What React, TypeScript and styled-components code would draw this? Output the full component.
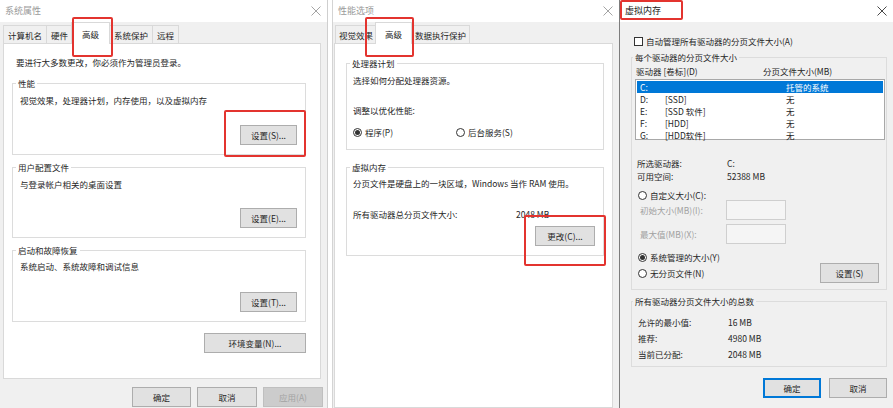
import React from "react"
import styled, { createGlobalStyle } from "styled-components"

const GlobalStyle = createGlobalStyle`
  html, body { margin: 0; padding: 0; background: #fff; }
  body {
    font-family: "Noto Sans CJK SC", "Noto Sans", sans-serif;
    font-size: 8.5px;
    color: #262626;
  }
  * { box-sizing: border-box; }
`

const Screen = styled.div`
  display: flex;
  width: 893px;
  height: 408px;
  overflow: hidden;
  background: #fff;
`

const Spacer = styled.div<{ $w: number }>`
  flex: none;
  width: ${(p) => p.$w}px;
  background: #fff;
`

const Dialog = styled.div<{ $width: number; $left?: string; $right?: string }>`
  flex: none;
  width: ${(p) => p.$width}px;
  height: 408px;
  display: flex;
  flex-direction: column;
  background: #f0f0f0;
  border-left: ${(p) => (p.$left ? `1px solid ${p.$left}` : "none")};
  border-right: ${(p) => (p.$right ? `1px solid ${p.$right}` : "none")};
`

const TitleBar = styled.div`
  flex: none;
  height: 22px;
  display: flex;
  align-items: center;
  justify-content: space-between;
  padding: 0 6px 0 5px;
  background: #fff;
`

const Title = styled.span<{ $active?: boolean }>`
  position: relative;
  font-size: 9px;
  line-height: 12px;
  color: ${(p) => (p.$active ? "#1a1a1a" : "#9a9a9a")};
`

const Body = styled.div<{ $pad: string }>`
  flex: 1;
  display: flex;
  flex-direction: column;
  padding: ${(p) => p.$pad};
  min-height: 0;
`

const TabRow = styled.div<{ $indent: number }>`
  flex: none;
  display: flex;
  align-items: flex-end;
  height: 21px;
  padding-left: ${(p) => p.$indent}px;
`

const Tab = styled.div<{ $selected?: boolean; $px: number }>`
  position: relative;
  display: flex;
  align-items: center;
  height: ${(p) => (p.$selected ? 22 : 18)}px;
  padding: 0 ${(p) => (p.$selected ? p.$px + 6 : p.$px)}px;
  margin: 0 -1px ${(p) => (p.$selected ? -1 : 0)}px ${(p) => (p.$selected ? -1 : 0)}px;
  border: 1px solid #d9d9d9;
  border-bottom: none;
  background: ${(p) => (p.$selected ? "#fff" : "#f0f0f0")};
  z-index: ${(p) => (p.$selected ? 2 : 1)};
  white-space: nowrap;
  line-height: 12px;
`

const TabPanel = styled.div<{ $height?: number; $pad: string }>`
  display: flex;
  flex-direction: column;
  ${(p) => (p.$height ? `height: ${p.$height}px; flex: none;` : "flex: 1;")}
  padding: ${(p) => p.$pad};
  background: #fff;
  border: 1px solid #d9d9d9;
`

const Highlight = styled.span<{ $t: number; $r: number; $b: number; $l: number }>`
  position: absolute;
  top: ${(p) => p.$t}px;
  right: ${(p) => p.$r}px;
  bottom: ${(p) => p.$b}px;
  left: ${(p) => p.$l}px;
  border: 2px solid #e3342f;
  border-radius: 2px;
  pointer-events: none;
  z-index: 5;
`

const Note = styled.div`
  line-height: 12px;
  padding-left: 4px;
  margin-bottom: 9px;
`

const Group = styled.fieldset<{ $pad: string; $mt?: number }>`
  display: flex;
  flex-direction: column;
  margin: ${(p) => p.$mt ?? 0}px 0 0 0;
  padding: ${(p) => p.$pad};
  border: 1px solid #dcdcdc;
  min-width: 0;
`

const Legend = styled.legend<{ $shift: number }>`
  padding: 0 2px;
  margin-left: ${(p) => p.$shift}px;
  line-height: 12px;
  font-size: 8.5px;
`

const Text = styled.div<{ $mt?: number }>`
  line-height: 12px;
  margin-top: ${(p) => p.$mt ?? 0}px;
  white-space: nowrap;
`

const ButtonRow = styled.div<{ $mt?: number; $gap?: number }>`
  display: flex;
  justify-content: flex-end;
  gap: ${(p) => p.$gap ?? 6}px;
  margin-top: ${(p) => p.$mt ?? 0}px;
`

const Button = styled.button<{ $w: number; $primary?: boolean }>`
  position: relative;
  flex: none;
  width: ${(p) => p.$w}px;
  height: 20px;
  padding: 0;
  font-family: inherit;
  font-size: 8.5px;
  color: #262626;
  background: #e1e1e1;
  border: 1px solid ${(p) => (p.$primary ? "#0078d7" : "#adadad")};
  box-shadow: ${(p) => (p.$primary ? "inset 0 0 0 1px #0078d7" : "none")};
  &:disabled {
    color: #a3a3a3;
    background: #cccccc;
    border-color: #bfbfbf;
  }
`

const Anchor = styled.span`
  position: relative;
  display: inline-flex;
`

const Footer = styled.div`
  flex: none;
  display: flex;
  justify-content: flex-end;
  gap: 6px;
  padding-top: 8px;
  margin-right: -2px;
`

const InfoRow = styled.div<{ $col: number; $mt?: number; $h?: number; $indent?: number }>`
  display: grid;
  grid-template-columns: ${(p) => p.$col}px auto;
  align-items: center;
  height: ${(p) => p.$h ?? 12}px;
  margin-top: ${(p) => p.$mt ?? 0}px;
  padding-left: ${(p) => p.$indent ?? 0}px;
  white-space: nowrap;
`

const RadioGrid = styled.div<{ $mt: number }>`
  display: grid;
  grid-template-columns: 103px auto;
  margin-top: ${(p) => p.$mt}px;
`

const Choice = styled.label<{ $mt?: number; $indent?: number }>`
  display: flex;
  align-items: center;
  gap: 3px;
  height: 12px;
  margin-top: ${(p) => p.$mt ?? 0}px;
  padding-left: ${(p) => p.$indent ?? 0}px;
  white-space: nowrap;
`

const RadioDot = styled.span<{ $on?: boolean }>`
  flex: none;
  width: 9px;
  height: 9px;
  border: 1px solid #333;
  border-radius: 50%;
  background: #fff;
  display: flex;
  align-items: center;
  justify-content: center;
  &::after {
    content: "";
    width: 5px;
    height: 5px;
    border-radius: 50%;
    background: ${(p) => (p.$on ? "#333" : "transparent")};
  }
`

const CheckBox = styled.span`
  flex: none;
  width: 9px;
  height: 9px;
  border: 1px solid #333;
  background: #fff;
`

const ListHeader = styled.div`
  display: grid;
  grid-template-columns: 127px auto;
  height: 12px;
  line-height: 12px;
  padding-left: 1px;
`

const ListBox = styled.div`
  margin-top: 2px;
  height: 61px;
  padding: 1px;
  background: #fff;
  border: 1px solid #a8a8a8;
`

const ListRow = styled.div<{ $selected?: boolean }>`
  display: grid;
  grid-template-columns: 25px 121px auto;
  height: 12px;
  line-height: 12px;
  padding-left: 3px;
  background: ${(p) => (p.$selected ? "#0078d7" : "transparent")};
  color: ${(p) => (p.$selected ? "#fff" : "inherit")};
  white-space: nowrap;
`

const SizeRow = styled.div<{ $mt: number }>`
  display: grid;
  grid-template-columns: 86px 60px;
  align-items: center;
  height: 20px;
  margin-top: ${(p) => p.$mt}px;
  padding-left: 5px;
  color: #a0a0a0;
  white-space: nowrap;
`

const Field = styled.div`
  height: 20px;
  background: #f5f5f5;
  border: 1px solid #cfcfcf;
`

const SplitRow = styled.div`
  display: flex;
  align-items: center;
  justify-content: space-between;
  padding-right: 6px;
`

const Close = ({ color }: { color: string }) => (
  <svg width="10" height="10" viewBox="0 0 10 10">
    <path d="M0.5 0.5 L9.5 9.5 M9.5 0.5 L0.5 9.5" stroke={color} strokeWidth="0.9" />
  </svg>
)

const SystemProperties = () => (
  <Dialog $width={328} $right="#cfcfcf">
    <TitleBar>
      <Title>系统属性</Title>
      <Close color="#9a9a9a" />
    </TitleBar>
    <Body $pad="0 6px 0 3px">
      <TabRow $indent={0}>
        <Tab $px={4}>计算机名</Tab>
        <Tab $px={4}>硬件</Tab>
        <Tab $px={4} $selected>
          高级
          <Highlight $t={-6} $r={-4} $b={-13} $l={0} />
        </Tab>
        <Tab $px={4}>系统保护</Tab>
        <Tab $px={4}>远程</Tab>
      </TabRow>
      <TabPanel $height={336} $pad="12px 14px 0 8px">
        <Note>要进行大多数更改，你必须作为管理员登录。</Note>
        <Group $pad="5px 8px 9px 7px">
          <Legend $shift={-4}>性能</Legend>
          <Text>视觉效果，处理器计划，内存使用，以及虚拟内存</Text>
          <ButtonRow $mt={19}>
            <Anchor>
              <Button $w={57}>设置(S)...</Button>
              <Highlight $t={-15} $r={-9} $b={-12} $l={-16} />
            </Anchor>
          </ButtonRow>
        </Group>
        <Group $pad="5px 8px 9px 7px" $mt={6}>
          <Legend $shift={-4}>用户配置文件</Legend>
          <Text>与登录帐户相关的桌面设置</Text>
          <ButtonRow $mt={18}>
            <Button $w={57}>设置(E)...</Button>
          </ButtonRow>
        </Group>
        <Group $pad="4px 8px 9px 7px" $mt={6}>
          <Legend $shift={-4}>启动和故障恢复</Legend>
          <Text>系统启动、系统故障和调试信息</Text>
          <ButtonRow $mt={20}>
            <Button $w={57}>设置(T)...</Button>
          </ButtonRow>
        </Group>
        <ButtonRow $mt={11}>
          <Button $w={102}>环境变量(N)...</Button>
        </ButtonRow>
      </TabPanel>
      <Footer>
        <Button $w={59}>确定</Button>
        <Button $w={60}>取消</Button>
        <Button $w={60} disabled>应用(A)</Button>
      </Footer>
    </Body>
  </Dialog>
)

const PerformanceOptions = () => (
  <Dialog $width={287} $left="#d4d4d4">
    <TitleBar>
      <Title>性能选项</Title>
      <Close color="#9a9a9a" />
    </TitleBar>
    <Body $pad="0 6px 0 1px">
      <TabRow $indent={1}>
        <Tab $px={3}>视觉效果</Tab>
        <Tab $px={3} $selected>
          高级
          <Highlight $t={-6} $r={-3} $b={-13} $l={-11} />
        </Tab>
        <Tab $px={3}>数据执行保护</Tab>
      </TabRow>
      <TabPanel $pad="13px 8px 0 11px">
        <Group $pad="5px 8px 11px 6px">
          <Legend $shift={-3}>处理器计划</Legend>
          <Text>选择如何分配处理器资源。</Text>
          <Text $mt={18}>调整以优化性能:</Text>
          <RadioGrid $mt={10}>
            <Choice>
              <RadioDot $on />
              程序(P)
            </Choice>
            <Choice>
              <RadioDot />
              后台服务(S)
            </Choice>
          </RadioGrid>
        </Group>
        <Group $pad="4px 8px 9px 6px" $mt={11}>
          <Legend $shift={-3}>虚拟内存</Legend>
          <Text>分页文件是硬盘上的一块区域，Windows 当作 RAM 使用。</Text>
          <InfoRow $col={163} $mt={19}>
            <span>所有驱动器总分页文件大小:</span>
            <span>2048 MB</span>
          </InfoRow>
          <ButtonRow $mt={6}>
            <Anchor>
              <Button $w={60}>更改(C)...</Button>
              <Highlight $t={-11} $r={-11} $b={-20} $l={-11} />
            </Anchor>
          </ButtonRow>
        </Group>
      </TabPanel>
    </Body>
  </Dialog>
)

const drives = [
  { letter: "C:", label: "", size: "托管的系统", selected: true },
  { letter: "D:", label: "[SSD]", size: "无" },
  { letter: "E:", label: "[SSD 软件]", size: "无" },
  { letter: "F:", label: "[HDD]", size: "无" },
  { letter: "G:", label: "[HDD软件]", size: "无" },
]

const VirtualMemory = () => (
  <Dialog $width={274} $left="#7d7d7d">
    <TitleBar>
      <Title $active>
        虚拟内存
        <Highlight $t={-5} $r={-22} $b={-3} $l={-5} />
      </Title>
      <Close color="#333" />
    </TitleBar>
    <Body $pad="13px 6px 0 11px">
      <Choice $indent={3}>
        <CheckBox />
        自动管理所有驱动器的分页文件大小(A)
      </Choice>
      <Group $pad="2px 1px 6px 3px" $mt={4}>
        <Legend $shift={-2}>每个驱动器的分页文件大小</Legend>
        <ListHeader>
          <span>驱动器 [卷标](D)</span>
          <span>分页文件大小(MB)</span>
        </ListHeader>
        <ListBox>
          {drives.map((d) => (
            <ListRow key={d.letter} $selected={d.selected}>
              <span>{d.letter}</span>
              <span>{d.label}</span>
              <span>{d.size}</span>
            </ListRow>
          ))}
        </ListBox>
        <InfoRow $col={90} $mt={16} $h={13} $indent={2}>
          <span>所选驱动器:</span>
          <span>C:</span>
        </InfoRow>
        <InfoRow $col={90} $h={13} $indent={2}>
          <span>可用空间:</span>
          <span>52388 MB</span>
        </InfoRow>
        <Choice $mt={7} $indent={3}>
          <RadioDot />
          自定义大小(C):
        </Choice>
        <SizeRow $mt={-1}>
          <span>初始大小(MB)(I):</span>
          <Field />
        </SizeRow>
        <SizeRow $mt={4}>
          <span>最大值(MB)(X):</span>
          <Field />
        </SizeRow>
        <Choice $mt={7} $indent={3}>
          <RadioDot $on />
          系统管理的大小(Y)
        </Choice>
        <SplitRow>
          <Choice $indent={3}>
            <RadioDot />
            无分页文件(N)
          </Choice>
          <Button $w={59}>设置(S)</Button>
        </SplitRow>
      </Group>
      <Group $pad="7px 1px 4px 6px" $mt={5}>
        <Legend $shift={-5}>所有驱动器分页文件大小的总数</Legend>
        <InfoRow $col={90} $h={16}>
          <span>允许的最小值:</span>
          <span>16 MB</span>
        </InfoRow>
        <InfoRow $col={90} $h={16}>
          <span>推荐:</span>
          <span>4980 MB</span>
        </InfoRow>
        <InfoRow $col={90} $h={16}>
          <span>当前已分配:</span>
          <span>2048 MB</span>
        </InfoRow>
      </Group>
      <ButtonRow $mt={11} $gap={8}>
        <Button $w={58} $primary>确定</Button>
        <Button $w={58}>取消</Button>
      </ButtonRow>
    </Body>
  </Dialog>
)

const App = () => (
  <>
    <GlobalStyle />
    <Screen>
      <SystemProperties />
      <Spacer $w={4} />
      <PerformanceOptions />
      <VirtualMemory />
    </Screen>
  </>
)

export default App
